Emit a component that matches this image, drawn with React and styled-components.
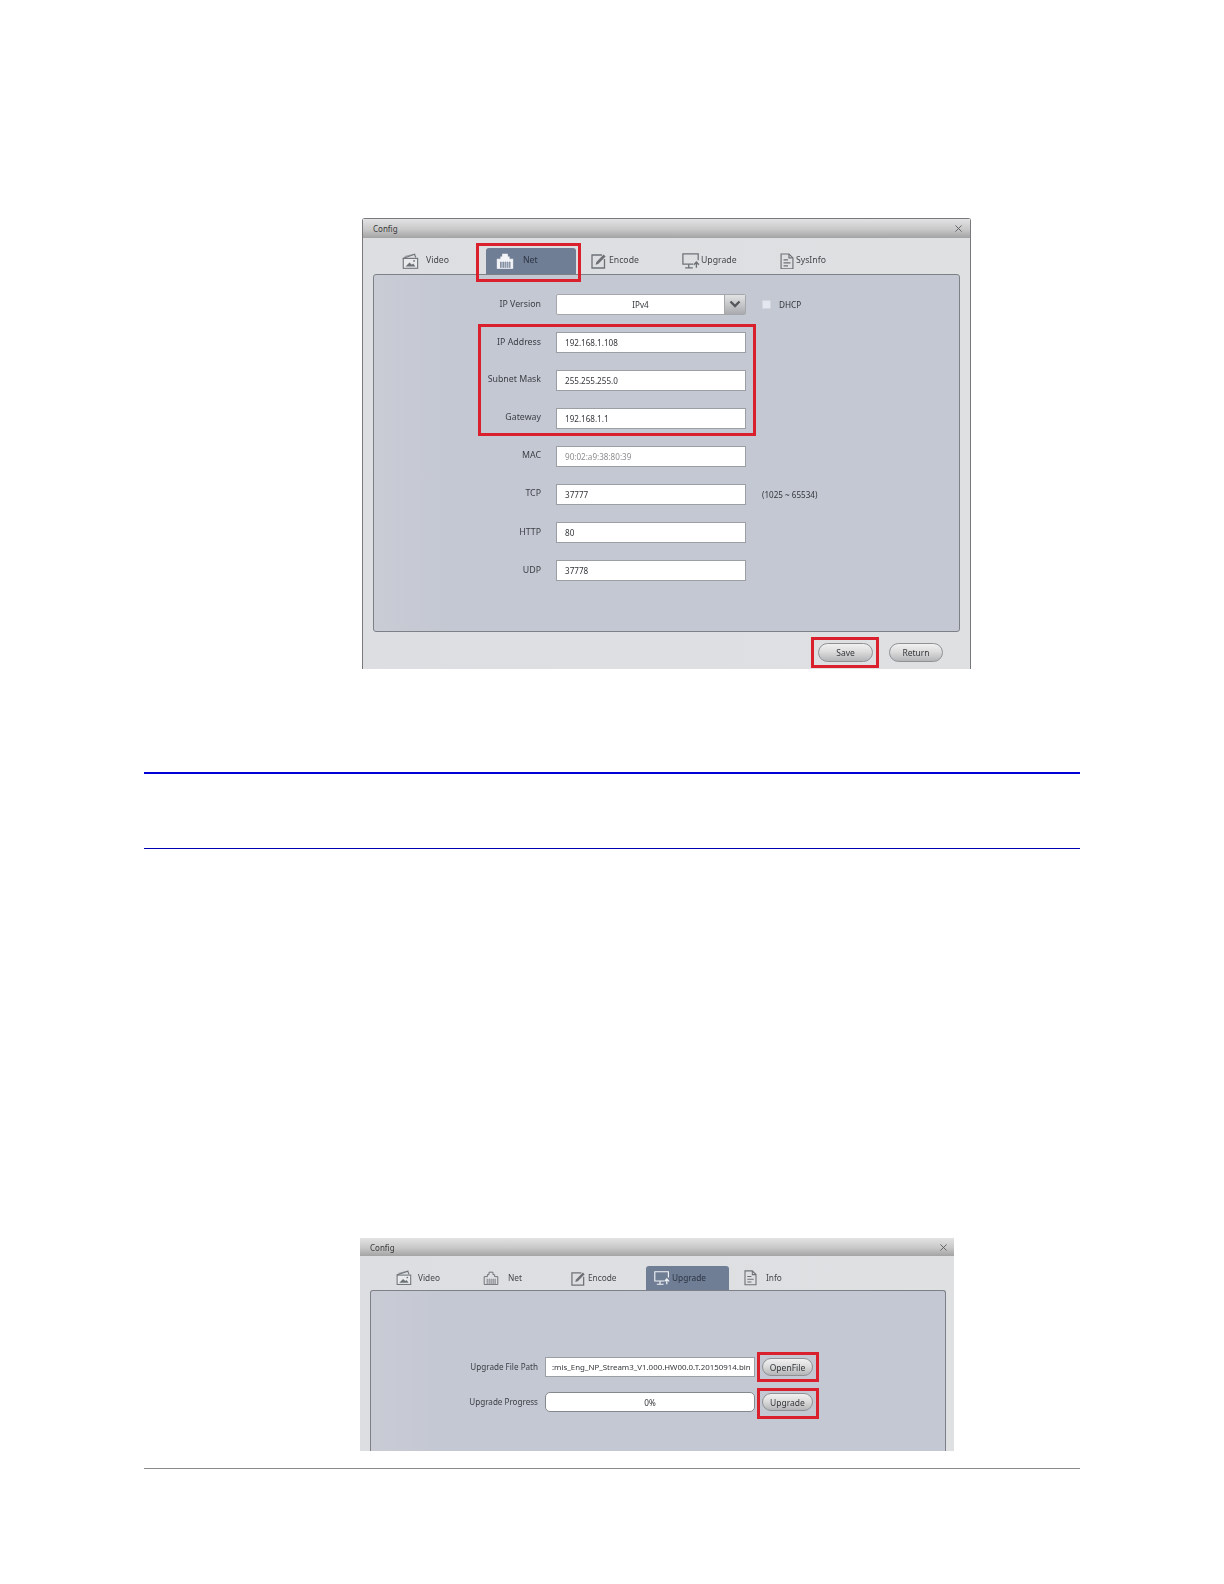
import React from "react";
import styled, { createGlobalStyle } from "styled-components";

const Global = createGlobalStyle`
  html, body { margin: 0; padding: 0; background: #fff; }
  * { box-sizing: border-box; }
`;

const Page = styled.div`
  width: 1224px;
  height: 1584px;
  padding-top: 218px;
  overflow: hidden;
  font-family: "Noto Sans", "Liberation Sans", sans-serif;
  font-size: 8.8px;
  color: #33363a;
`;

const Rule = styled.div`
  width: 936px;
  height: ${(p) => p.$h}px;
  margin: ${(p) => p.$top}px 0 0 144px;
  background: ${(p) => p.$color};
`;

const Dialog = styled.section`
  position: relative;
  width: ${(p) => p.$w}px;
  height: ${(p) => p.$h}px;
  margin: ${(p) => p.$top}px 0 0 ${(p) => p.$left}px;
  background: linear-gradient(90deg, #dcdee1, #dfe0e2);
  display: flex;
  flex-direction: column;
  filter: blur(0.35px);
  ${(p) =>
    p.$framed &&
    `border: 1px solid #77797c; border-bottom: 0; border-radius: 3px 3px 0 0;`}
`;

const TitleBar = styled.header`
  height: ${(p) => p.$h}px;
  flex: none;
  display: flex;
  align-items: center;
  justify-content: space-between;
  padding: 0 ${(p) => p.$padR}px 0 ${(p) => p.$padL}px;
  background: linear-gradient(180deg, #e3e3e3 0%, #c8c8c8 55%, #a3a3a3 100%);
  font-size: 8px;
  color: #3a3a3a;
`;

const TabBar = styled.nav`
  height: ${(p) => p.$h}px;
  flex: none;
  display: flex;
  align-items: flex-end;
  padding-left: ${(p) => p.$padL}px;
  font-size: ${(p) => p.$fs}px;
`;

const Tab = styled.div`
  position: relative;
  flex: none;
  display: flex;
  align-items: center;
  width: ${(p) => p.$w}px;
  height: ${(p) => p.$tall}px;
  padding-left: ${(p) => p.$pad}px;
  gap: ${(p) => p.$gap}px;
  border-radius: 3px 3px 0 0;
  color: ${(p) => (p.$active ? "#2c3442" : "#44474b")};
  background: ${(p) => (p.$active ? "#6f7d95" : "transparent")};
`;

const TabText = styled.span`
  margin-bottom: 2px;
`;

const RedFrame = styled.div`
  position: absolute;
  top: ${(p) => p.$t}px;
  right: ${(p) => p.$r}px;
  bottom: ${(p) => p.$b}px;
  left: ${(p) => p.$l}px;
  border: ${(p) => p.$bw}px solid #d9202c;
  pointer-events: none;
`;

const Panel = styled.div`
  flex: none;
  width: ${(p) => p.$w}px;
  height: ${(p) => p.$h}px;
  margin-left: ${(p) => p.$left}px;
  padding-top: ${(p) => p.$padT}px;
  background: linear-gradient(90deg, #c9ccd5 0%, #c4c8d2 12%, #c4c8d2 100%);
  border: 1px solid #7d8187;
  border-radius: 3px 3px 0 0;
  ${(p) => (p.$cut ? "border-bottom: 0;" : "border-radius: 3px;")}
`;

const Rows = styled.div`
  position: relative;
  display: flex;
  flex-direction: column;
  gap: 17.1px;
`;

const Row = styled.div`
  display: grid;
  grid-template-columns: 167px 190px auto;
  column-gap: 15px;
  align-items: center;
  height: 21px;
`;

const Label = styled.label`
  padding-bottom: ${(p) => (p.$flush ? 0 : 2)}px;
  text-align: right;
  white-space: nowrap;
  color: #3c3f44;
`;

const Field = styled.div`
  height: 21px;
  display: flex;
  align-items: center;
  padding-left: 8px;
  background: #fff;
  border: 1px solid #9b9ea3;
  border-width: 1px 1px 1.5px 1px;
  font-size: 8.1px;
  color: ${(p) => (p.$muted ? "#8b8d90" : "#33363a")};
`;

const Select = styled.div`
  height: 21px;
  display: flex;
  background: #fff;
  border: 1px solid #a5a7ab;
  border-radius: 2px;
  font-size: 8.1px;
`;

const SelectValue = styled.div`
  flex: 1;
  display: flex;
  align-items: center;
  justify-content: center;
`;

const SelectArrow = styled.div`
  width: 21px;
  display: flex;
  align-items: center;
  justify-content: center;
  background: linear-gradient(180deg, #e2e3e4, #a9abae);
  border-left: 1px solid #a5a7ab;
`;

const Note = styled.span`
  padding-left: 1px;
  font-size: 8.1px;
  color: #33363a;
  white-space: nowrap;
`;

const CheckRow = styled.div`
  display: flex;
  align-items: center;
  gap: 8px;
  padding-left: 1px;
  font-size: 8.2px;
`;

const Check = styled.span`
  width: 9px;
  height: 9px;
  margin-top: 1px;
  background: #e4e7ef;
  border: 1px solid #d3d6dd;
  border-radius: 1px;
`;

const Footer = styled.div`
  position: relative;
  flex: 1;
  display: flex;
  justify-content: flex-end;
  align-items: flex-start;
  gap: 16px;
  padding: 11px 27px 0 0;
`;

const PillWrap = styled.div`
  position: relative;
  flex: none;
`;

const Pill = styled.button`
  display: block;
  width: ${(p) => p.$w}px;
  height: ${(p) => p.$h}px;
  padding: 0;
  font: inherit;
  font-size: 8.5px;
  color: #33363a;
  border: 1px solid #8f9195;
  border-radius: 10px;
  background: linear-gradient(180deg, #f1f1f1 0%, #dcdcdc 45%, #b4b5b7 100%);
`;

const UpgradeRows = styled.div`
  display: flex;
  flex-direction: column;
  gap: 15px;
  font-size: 8.1px;
`;

const UpgradeRow = styled.div`
  display: grid;
  grid-template-columns: 167px 210px 51px;
  column-gap: 7px;
  align-items: center;
  height: 20px;
`;

const PathField = styled.div`
  height: 20px;
  display: flex;
  align-items: center;
  padding-left: 6px;
  background: #fff;
  border: 1px solid #9b9ea3;
  font-size: 7.9px;
  white-space: nowrap;
  color: #33363a;
`;

const Progress = styled.div`
  height: 20px;
  display: flex;
  align-items: center;
  justify-content: center;
  background: #fff;
  border: 1px solid #85888d;
  border-radius: 5px;
  font-size: 8.2px;
`;

const Ico = styled.svg`
  flex: none;
  display: block;
  fill: none;
  stroke: ${(p) => (p.$active ? "#f2f4f7" : "#6d7176")};
  stroke-width: 1.2;
`;

const CloseGlyph = styled.svg`
  flex: none;
  display: block;
  fill: none;
  stroke: #55575a;
  stroke-width: 1;
`;

const VideoIcon = ({ s = 18 }) => (
  <Ico width={s} height={s * 0.9} viewBox="0 0 20 18">
    <path d="M2 6 L15 1.5 L16.5 5" />
    <path d="M4 4 L16 1" opacity=".6" />
    <rect x="2.5" y="6" width="16" height="11" fill="#e9eaec" />
    <path d="M5 15 L9.5 10.5 L12 13 L13.5 11.8 L16 15 Z" fill="#6d7176" stroke="none" />
    <circle cx="14.5" cy="8.8" r="1" fill="#6d7176" stroke="none" />
  </Ico>
);

const NetIcon = ({ s = 18, active }) => (
  <Ico $active={active} width={s} height={s * 0.9} viewBox="0 0 20 18">
    <path d="M1.5 17 V7 H5.5 V4.5 H7.5 V1.5 H12.5 V4.5 H14.5 V7 H18.5 V17 Z" fill={active ? "#f2f4f7" : "none"} />
    <path
      d="M5 16.5 V10 H5.8 V16.5 M7.6 16.5 V10 H8.4 V16.5 M10 16.5 V10 H10.8 V16.5 M12.4 16.5 V10 H13.2 V16.5 M14.8 16.5 V10 H15.6 V16.5"
      stroke={active ? "#6f7d95" : "#8a8d92"}
      strokeWidth=".9"
    />
  </Ico>
);

const EncodeIcon = ({ s = 16 }) => (
  <Ico width={s} height={s} viewBox="0 0 16 16">
    <path d="M13.5 6 V15 H1 V2 H11" strokeWidth="1.3" />
    <path d="M4.5 11.8 L5.4 9 L12.6 1.6 L14.6 3.4 L7.2 10.9 Z" fill="#6d7176" stroke="none" />
  </Ico>
);

const UpgradeIcon = ({ s = 18, active }) => (
  <Ico $active={active} width={s} height={s * 0.9} viewBox="0 0 20 18">
    <path d="M12.5 12.5 H1 V1 H18 V8" strokeWidth="1.4" />
    <path d="M7.5 12.5 V16 M3.5 16.5 H12" strokeWidth="1.4" />
    <path d="M16 16.5 V10.5 M13.2 13 L16 10 L18.8 13" strokeWidth="1.5" />
  </Ico>
);

const InfoIcon = ({ s = 14 }) => (
  <Ico width={s} height={s * 1.2} viewBox="0 0 14 17">
    <path d="M1 1 H9 L13 5 V16 H1 Z" />
    <path d="M9 1 V5 H13" />
    <path d="M3.5 7 H8 M3.5 10 H10.5 M3.5 13 H8" strokeWidth="1.1" />
  </Ico>
);

const CloseIcon = () => (
  <CloseGlyph width="7" height="7" viewBox="0 0 8 8">
    <path d="M.5 .5 L7.5 7.5 M7.5 .5 L.5 7.5" />
  </CloseGlyph>
);

const Chevron = () => (
  <svg width="12" height="8" viewBox="0 0 12 8">
    <path d="M1.5 1.5 L6 6 L10.5 1.5" fill="none" stroke="#55585c" strokeWidth="2.4" />
  </svg>
);

const netRows = [
  { label: "MAC", value: "90:02:a9:38:80:39", muted: true },
  { label: "TCP", value: "37777", note: "(1025 ~ 65534)" },
  { label: "HTTP", value: "80" },
  { label: "UDP", value: "37778" },
];

const addressRows = [
  { label: "IP Address", value: "192.168.1.108", flush: true },
  { label: "Subnet Mask", value: "255.255.255.0" },
  { label: "Gateway", value: "192.168.1.1" },
];

const FieldRow = ({ label, value, muted, note, flush }) => (
  <Row>
    <Label $flush={flush}>{label}</Label>
    <Field $muted={muted}>{value}</Field>
    {note && <Note>{note}</Note>}
  </Row>
);

export default function App() {
  return (
    <Page>
      <Global />
      <Dialog $w={609} $h={451} $top={0} $left={362} $framed>
        <TitleBar $h={19} $padL={10} $padR={8}>
          <span>Config</span>
          <CloseIcon />
        </TitleBar>
        <TabBar $h={36} $padL={29} $fs={8.7}>
          <Tab $w={94} $tall={26} $pad={9} $gap={7}><VideoIcon /><TabText>Video</TabText></Tab>
          <Tab $w={90} $tall={26} $pad={10} $gap={9} $active>
            <NetIcon active /><TabText>Net</TabText>
            <RedFrame $t={-5} $r={-5} $b={-8} $l={-10} $bw={3} />
          </Tab>
          <Tab $w={95} $tall={26} $pad={15} $gap={2}><EncodeIcon /><TabText>Encode</TabText></Tab>
          <Tab $w={99} $tall={26} $pad={11} $gap={1}><UpgradeIcon /><TabText>Upgrade</TabText></Tab>
          <Tab $w={80} $tall={26} $pad={10} $gap={2}><InfoIcon /><TabText>SysInfo</TabText></Tab>
        </TabBar>
        <Panel $w={587} $h={358} $left={10} $padT={18.5}>
          <Rows>
            <Row>
              <Label $flush>IP Version</Label>
              <Select>
                <SelectValue>IPv4</SelectValue>
                <SelectArrow><Chevron /></SelectArrow>
              </Select>
              <CheckRow><Check /><span>DHCP</span></CheckRow>
            </Row>
            {addressRows.map((r) => <FieldRow key={r.label} {...r} />)}
            {netRows.map((r) => <FieldRow key={r.label} {...r} />)}
            <RedFrame $t={30} $r={203} $b={145} $l={104} $bw={3} />
          </Rows>
        </Panel>
        <Footer>
          <PillWrap>
            <Pill $w={55} $h={19}>Save</Pill>
            <RedFrame $t={-6} $r={-6} $b={-6} $l={-7} $bw={3} />
          </PillWrap>
          <PillWrap>
            <Pill $w={54} $h={19}>Return</Pill>
          </PillWrap>
        </Footer>
      </Dialog>

      <Rule $h={2} $top={103} $color="#0000d6" />
      <Rule $h={1} $top={74} $color="#0000b4" />

      <Dialog $w={594} $h={213} $top={389} $left={360}>
        <TitleBar $h={18} $padL={10} $padR={7}>
          <span>Config</span>
          <CloseIcon />
        </TitleBar>
        <TabBar $h={34} $padL={25} $fs={8.3}>
          <Tab $w={88} $tall={24} $pad={10} $gap={6}><VideoIcon s={17} /><TabText>Video</TabText></Tab>
          <Tab $w={90} $tall={24} $pad={10} $gap={9}><NetIcon s={16} /><TabText>Net</TabText></Tab>
          <Tab $w={83} $tall={24} $pad={8} $gap={2}><EncodeIcon s={15} /><TabText>Encode</TabText></Tab>
          <Tab $w={83} $tall={24} $pad={8} $gap={2} $active><UpgradeIcon s={16} active /><TabText>Upgrade</TabText></Tab>
          <Tab $w={70} $tall={24} $pad={15} $gap={9}><InfoIcon s={13} /><TabText>Info</TabText></Tab>
        </TabBar>
        <Panel $w={576} $h={161} $left={10} $padT={66} $cut>
          <UpgradeRows>
            <UpgradeRow>
              <Label>Upgrade File Path</Label>
              <PathField>:mis_Eng_NP_Stream3_V1.000.HW00.0.T.20150914.bin</PathField>
              <PillWrap>
                <Pill $w={51} $h={18}>OpenFile</Pill>
                <RedFrame $t={-6} $r={-6} $b={-6} $l={-5} $bw={3} />
              </PillWrap>
            </UpgradeRow>
            <UpgradeRow>
              <Label>Upgrade Progress</Label>
              <Progress>0%</Progress>
              <PillWrap>
                <Pill $w={51} $h={18}>Upgrade</Pill>
                <RedFrame $t={-5} $r={-6} $b={-8} $l={-5} $bw={3} />
              </PillWrap>
            </UpgradeRow>
          </UpgradeRows>
        </Panel>
      </Dialog>

      <Rule $h={1} $top={17} $color="#8a8a8a" />
    </Page>
  );
}
